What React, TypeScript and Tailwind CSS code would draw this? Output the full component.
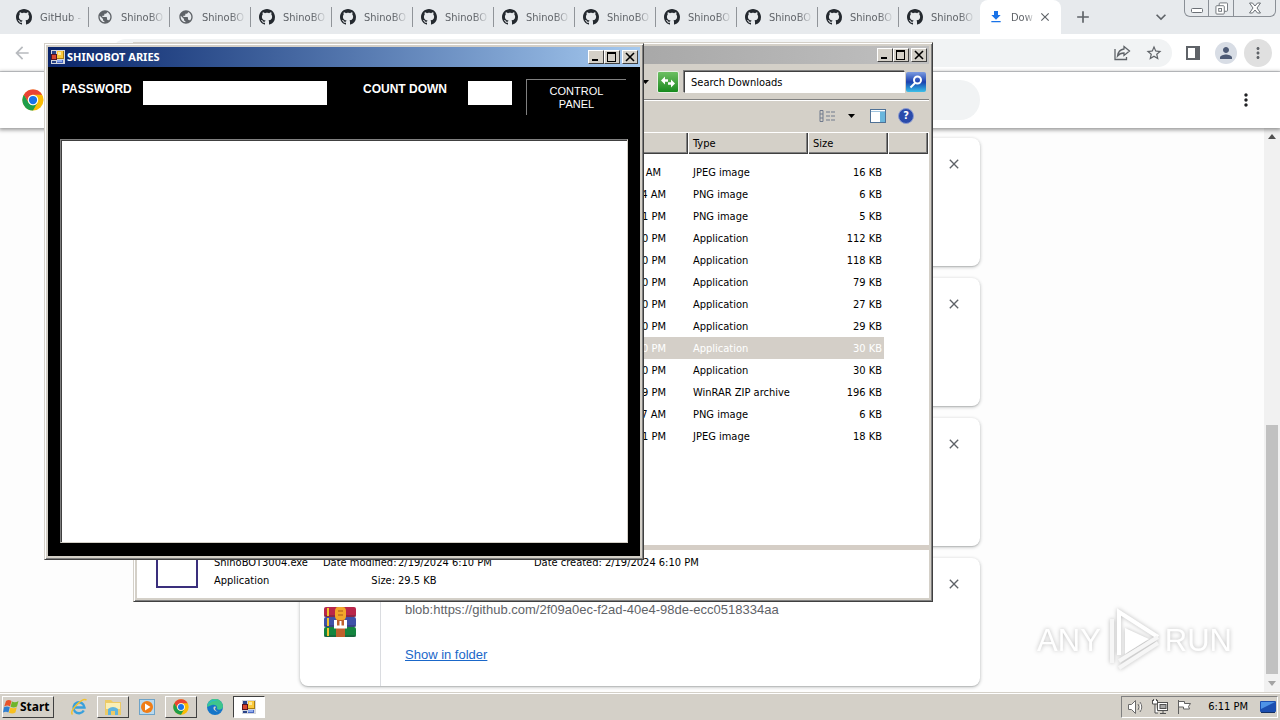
import type { ReactNode } from "react";
import { MdArrowBack, MdClose, MdDownload, MdExpandMore, MdMoreVert, MdPerson, MdPublic, MdStarBorder, MdAdd } from "react-icons/md";

const UI_FONT = "font-['DejaVu_Sans_Condensed','DejaVu_Sans',sans-serif]";
const BOLD_FONT = "font-['Noto_Sans',sans-serif]";

const tabs = [
  { title: "GitHub -", icon: "github" },
  { title: "ShinoBO", icon: "globe" },
  { title: "ShinoBO", icon: "globe" },
  { title: "ShinoBO", icon: "github" },
  { title: "ShinoBO", icon: "github" },
  { title: "ShinoBO", icon: "github" },
  { title: "ShinoBO", icon: "github" },
  { title: "ShinoBO", icon: "github" },
  { title: "ShinoBO", icon: "github" },
  { title: "ShinoBO", icon: "github" },
  { title: "ShinoBO", icon: "github" },
  { title: "ShinoBO", icon: "github" },
];

const files = [
  { time: "AM", type: "JPEG image", size: "16 KB" },
  { time: "4 AM", type: "PNG image", size: "6 KB" },
  { time: "1 PM", type: "PNG image", size: "5 KB" },
  { time: "0 PM", type: "Application", size: "112 KB" },
  { time: "0 PM", type: "Application", size: "118 KB" },
  { time: "0 PM", type: "Application", size: "79 KB" },
  { time: "0 PM", type: "Application", size: "27 KB" },
  { time: "0 PM", type: "Application", size: "29 KB" },
  { time: "0 PM", type: "Application", size: "30 KB", selected: true },
  { time: "0 PM", type: "Application", size: "30 KB" },
  { time: "9 PM", type: "WinRAR ZIP archive", size: "196 KB" },
  { time: "7 AM", type: "PNG image", size: "6 KB" },
  { time: "1 PM", type: "JPEG image", size: "18 KB" },
];

const GithubIcon = () => (
  <svg viewBox="0 0 16 16" className="w-4 h-4 shrink-0" fill="#24292f">
    <path d="M8 0C3.58 0 0 3.58 0 8c0 3.54 2.29 6.53 5.47 7.59.4.07.55-.17.55-.38 0-.19-.01-.82-.01-1.49-2.01.37-2.53-.49-2.69-.94-.09-.23-.48-.94-.82-1.13-.28-.15-.68-.52-.01-.53.63-.01 1.08.58 1.23.82.72 1.21 1.87.87 2.33.66.07-.52.28-.87.51-1.07-1.78-.2-3.64-.89-3.64-3.95 0-.87.31-1.59.82-2.15-.08-.2-.36-1.02.08-2.12 0 0 .67-.21 2.2.82.64-.18 1.32-.27 2-.27.68 0 1.36.09 2 .27 1.53-1.04 2.2-.82 2.2-.82.44 1.1.16 1.92.08 2.12.51.56.82 1.27.82 2.15 0 3.07-1.87 3.75-3.65 3.95.29.25.54.73.54 1.48 0 1.07-.01 1.93-.01 2.2 0 .21.15.46.55.38A8.013 8.013 0 0016 8c0-4.42-3.58-8-8-8z" />
  </svg>
);

const ChromeLogo = ({ className }: { className: string }) => (
  <svg viewBox="0 0 48 48" className={className}>
    <circle cx="24" cy="24" r="23" fill="#fbbc05" />
    <path d="M4 12.5A23 23 0 0 1 44 12.5H24A11.5 11.5 0 0 0 14 29.7Z" fill="#ea4335" />
    <path d="M4 12.5L14 29.7A11.5 11.5 0 0 0 34 29.7L24 47A23 23 0 0 1 4 12.5Z" fill="#1e9e4a" />
    <circle cx="24" cy="24" r="11.5" fill="#fff" />
    <circle cx="24" cy="24" r="9" fill="#1a73e8" />
  </svg>
);

// default icon of a Windows Forms application
const FormIcon = ({ className }: { className: string }) => (
  <svg viewBox="0 0 14 14" className={className} shapeRendering="crispEdges">
    <rect x="0" y="0" width="14" height="14" fill="#d4d6dc" />
    <rect x="1" y="1" width="4" height="3" fill="#2a4488" />
    <rect x="0" y="4" width="6" height="6" fill="#5a1420" />
    <rect x="1" y="5" width="4" height="4" fill="#d8482f" />
    <rect x="1" y="11" width="4" height="2" fill="#2a4488" />
    <rect x="6" y="1" width="7" height="8" fill="#a87d12" />
    <rect x="6" y="1" width="6" height="7" fill="#fbc93c" />
    <rect x="7" y="2" width="3" height="3" fill="#fdeaa0" />
    <rect x="6" y="10" width="6" height="3" fill="#4a68c0" />
    <rect x="6" y="10" width="5" height="2" fill="#8fabee" />
  </svg>
);

const ControlButton = ({ label, children }: { label: string; children: ReactNode }) => (
  <button
    type="button"
    aria-label={label}
    className="flex w-4 h-[14px] items-center justify-center bg-[#d4d0c8] border border-t-white border-l-white border-r-[#404040] border-b-[#404040]"
  >
    <svg viewBox="0 0 12 12" className="w-3 h-3" shapeRendering="crispEdges" fill="none" stroke="#000">
      {children}
    </svg>
  </button>
);

const WindowControls = () => (
  <div className="flex ml-auto">
    <ControlButton label="Minimize"><path d="M2 9h6" strokeWidth="2" /></ControlButton>
    <ControlButton label="Maximize"><path d="M1.5 2v8.5h8V2" /><path d="M1 2h9" strokeWidth="2" /></ControlButton>
    <div className="w-[2px]" />
    <ControlButton label="Close">
      <path d="M2 2l8 8M10 2l-8 8" strokeWidth="1.6" shapeRendering="auto" />
    </ControlButton>
  </div>
);

const TabStrip = () => (
  <div className="flex h-[34px] bg-[#e7eaed]">
    <div className="flex flex-1 min-w-0 pl-2">
      {tabs.map((tab, i) => (
        <button key={i} type="button" className="flex flex-1 min-w-0 items-center pl-2">
          {tab.icon === "github" ? <GithubIcon /> : <MdPublic className="w-4 h-4 shrink-0 text-[#5f6368]" />}
          <span className={`flex-1 ml-2 pt-[2px] whitespace-nowrap text-left text-[11px] text-[#5f6368] [mask-image:linear-gradient(to_right,black_65%,transparent)] ${UI_FONT}`}>
            {tab.title}
          </span>
          <span className={`w-px h-5 ml-1 ${i === tabs.length - 1 ? "" : "bg-[#909499]"}`} />
        </button>
      ))}
      <div className="flex flex-1 min-w-0 items-center pl-2 bg-white rounded-t-lg">
        <MdDownload className="w-4 h-4 shrink-0 text-[#1a73e8]" />
        <span className={`w-6 ml-[7px] pt-[2px] whitespace-nowrap text-[11px] text-[#5f6368] [mask-image:linear-gradient(to_right,black_60%,transparent)] ${UI_FONT}`}>
          Dow
        </span>
        <button type="button" aria-label="Close tab" className="ml-[3px]">
          <MdClose className="w-[14px] h-[14px] text-[#5f6368]" />
        </button>
      </div>
    </div>
    <div className="flex w-[219px] items-center pl-3 pr-1">
      <button type="button" aria-label="New tab"><MdAdd className="w-5 h-5 text-[#5f6368]" /></button>
      <button type="button" aria-label="Search tabs" className="ml-auto mr-[13px]">
        <MdExpandMore className="w-5 h-5 text-[#5f6368]" />
      </button>
      <div className="flex h-[17px] self-start rounded-b-md border border-t-0 border-[#8a8f96] text-[#5f6368]">
        <button type="button" aria-label="Minimize" className="flex w-6 items-center justify-center border-r border-[#8a8f96]">
          <svg viewBox="0 0 12 12" className="w-3 h-3" fill="#fff" stroke="#6b7076"><rect x="0.5" y="6.5" width="11" height="4" rx="1" /></svg>
        </button>
        <button type="button" aria-label="Restore" className="flex w-[25px] items-center justify-center border-r border-[#8a8f96]">
          <svg viewBox="0 0 14 14" className="w-[13px] h-[13px]" fill="#fff" stroke="#6b7076"><rect x="4.5" y="1" width="9" height="9" rx="1" /><rect x="1" y="4" width="9" height="9" rx="1" /><rect x="4" y="7" width="3" height="3" /></svg>
        </button>
        <button type="button" aria-label="Close" className="flex w-[41px] items-center justify-center">
          <svg viewBox="0 0 12 12" className="w-3 h-3" fill="#fff" stroke="#6b7076"><path d="M0.5 1h3L6 4l2.500-3h3L8 6l3.500 5h-3L6 8l-2.500 3h-3L4 6z" /></svg>
        </button>
      </div>
    </div>
  </div>
);

const BrowserToolbar = () => (
  <div className="flex h-[38px] items-center bg-white border-b border-[#d5d7da] pl-3 pr-2 text-[#5f6368]">
    <button type="button" aria-label="Back"><MdArrowBack className="w-5 h-5 text-[#b8bbbf]" /></button>
    <div className="flex flex-1 h-7 ml-20 items-center justify-end gap-[14px] rounded-full bg-[#f1f3f4] pr-[9px]">
      <button type="button" aria-label="Share">
        <svg viewBox="0 0 18 18" className="w-[18px] h-[18px]" fill="none" stroke="#5f6368" strokeWidth="1.300">
          <path d="M2 5v10.500h11.500V13" />
          <path d="M11 2.500L16.500 7 11 11.500V9C8 9 6 10 4.500 12 5 8 7.500 5.500 11 5z" />
        </svg>
      </button>
      <button type="button" aria-label="Bookmark"><MdStarBorder className="w-[18px] h-[18px]" /></button>
    </div>
    <button type="button" aria-label="Side panel" className="ml-[14px]">
      <svg viewBox="0 0 14 14" className="w-[14px] h-[14px]"><path d="M1 1h12v12H1z" fill="#fff" stroke="#5f6368" strokeWidth="2" /><path d="M9 0h5v14H9z" fill="#5f6368" /></svg>
    </button>
    <button type="button" aria-label="Profile" className="flex w-[22px] h-[22px] ml-[15px] items-center justify-center rounded-full bg-[#d8dde5]">
      <MdPerson className="w-[18px] h-[18px] text-[#4d5a75]" />
    </button>
    <button type="button" aria-label="Menu" className="flex w-7 h-7 ml-[7px] items-center justify-center rounded-full bg-[#e0e0e0]">
      <MdMoreVert className="w-[18px] h-[18px]" />
    </button>
  </div>
);

const WinrarIcon = () => (
  <svg viewBox="0 0 32 32" className="w-8 h-8">
    <rect x="0" y="1" width="32" height="10" rx="2" fill="#b9264a" />
    <rect x="0" y="11" width="32" height="10" rx="2" fill="#3f51a8" />
    <rect x="0" y="21" width="32" height="10" rx="2" fill="#14853f" />
    <path d="M0 10h32M0 20h32M0 30h32" stroke="#262a3b" strokeOpacity="0.6" />
    <path d="M4 2v8M4 12v8M4 22v8" stroke="#f3c12f" strokeWidth="2" />
    <rect x="12" y="1" width="9" height="30" fill="#c0602c" />
    <rect x="11" y="1" width="11" height="13" rx="4" fill="#f2a72a" />
    <path d="M14 5h5M14 9h5" stroke="#a9561c" />
    <path d="M11.500 14v7h10v-7" fill="none" stroke="#fff" strokeWidth="3" />
    <path d="M16.500 15v5" stroke="#fff" strokeWidth="2" />
  </svg>
);

const DownloadCard = ({ children }: { children?: ReactNode }) => (
  <li className="flex h-32 rounded-lg bg-white shadow-[0_1px_3px_1px_rgba(60,64,67,0.2),0_1px_1px_rgba(60,64,67,0.2)]">
    <div className="flex w-[81px] shrink-0 items-center justify-center border-r border-[#dadce0]">
      {children && <WinrarIcon />}
    </div>
    <div className="flex-1 pl-6 pt-11">{children}</div>
    <button type="button" aria-label="Remove from list" className="self-start mt-[18px] mr-[18px]">
      <MdClose className="w-4 h-4 text-[#5f6368]" />
    </button>
  </li>
);

const DownloadsPage = () => (
  <>
    <header className="relative flex h-14 shrink-0 items-center bg-white pl-[22px] pr-6 shadow-[0_1px_4px_1px_rgba(0,0,0,0.4)]">
      <ChromeLogo className="w-[22px] h-[22px]" />
      <input type="search" aria-label="Search downloads" className="w-[680px] h-10 mx-auto rounded-full bg-[#f1f3f4] px-4 outline-none" />
      <button type="button" aria-label="More actions"><MdMoreVert className="w-5 h-5 text-[#202124]" /></button>
    </header>
    <div className="flex flex-1 min-h-0 bg-[#fdfdfd]">
      <ul className="flex flex-1 flex-col items-stretch gap-3 overflow-hidden pt-[10px] pl-4 [&>li]:w-[680px] [&>li]:shrink-0 [&>li]:mx-auto">
        <DownloadCard />
        <DownloadCard />
        <DownloadCard />
        <DownloadCard>
          <p className="font-['Liberation_Sans',sans-serif] text-[13px] leading-4 text-[#5f6368]">blob:https://github.com/2f09a0ec-f2ad-40e4-98de-ecc0518334aa</p>
          <a href="#folder" className="inline-block mt-[29px] font-['Liberation_Sans',sans-serif] text-[13px] leading-4 text-[#1a67c9] underline">Show in folder</a>
        </DownloadCard>
      </ul>
      <div className="flex w-4 flex-col items-center bg-[#f1f1f1] py-[6px]">
        <svg viewBox="0 0 8 5" className="w-2 h-[5px]"><path d="M0 5l4-5 4 5z" fill="#505050" /></svg>
        <div className="flex-1" />
        <div className="w-3 h-[249px] mb-[7px] bg-[#c1c1c1]" />
        <svg viewBox="0 0 8 5" className="w-2 h-[5px]"><path d="M0 0l4 5 4-5z" fill="#a3a3a3" /></svg>
      </div>
    </div>
  </>
);

const frame = "border border-t-[#d4d0c8] border-l-[#d4d0c8] border-r-[#404040] border-b-[#404040] shadow-[inset_1px_1px_#fff,inset_-1px_-1px_#808080] bg-[#d4d0c8] p-[3px]";

const ExplorerWindow = () => (
  <section className={`absolute left-[133px] top-[42px] flex w-[800px] h-[560px] flex-col text-[11px] text-black ${UI_FONT} ${frame}`}>
    <div className="flex h-[18px] shrink-0 items-center bg-linear-to-r from-[#808080] to-[#c0c0c0] pr-[2px]">
      <WindowControls />
    </div>
    <div className="flex h-9 shrink-0 items-center justify-end border-b border-[#808080] pr-[3px]">
      <svg viewBox="0 0 7 4" className="w-[7px] h-1 mr-2"><path d="M0 0h7L3.500 4z" /></svg>
      <button type="button" aria-label="Refresh" className="flex w-[22px] h-[22px] items-center justify-center rounded-xs border border-[#e8efe4] bg-linear-to-b from-[#6cbf62] to-[#128a1c]">
        <svg viewBox="0 0 16 16" className="w-4 h-4" fill="#fff">
          <path d="M5 2.500v2.800h3v2.400H5v2.800L1 6.500zM11 5.500v2.800H8v2.400h3v2.800l4-4z" />
        </svg>
      </button>
      <input
        type="text"
        aria-label="Search"
        defaultValue="Search Downloads"
        className="w-[221px] h-[22px] ml-[5px] mr-px pt-[2px] border border-t-[#404040] border-l-[#404040] border-white bg-white px-[6px] shadow-[-1px_-1px_#808080] outline-none"
      />
      <button type="button" aria-label="Start search" className="flex w-5 h-5 items-center justify-center rounded-xs bg-linear-to-b from-[#7d9be0] via-[#1d3fae] to-[#3fc0e8]">
        <svg viewBox="0 0 16 16" className="w-4 h-4" fill="none" stroke="#fff" strokeWidth="2">
          <circle cx="9.500" cy="6" r="3.500" />
          <path d="M7 9l-4.500 4.500" />
        </svg>
      </button>
    </div>
    <div className="flex h-8 shrink-0 items-center justify-end border-t border-white pr-[15px] pb-px">
      <button type="button" aria-label="Change view" className="flex items-center">
        <svg viewBox="0 0 16 12" className="w-4 h-3" fill="none" stroke="#707a8c">
          <path d="M1 .5h3v11H1zM1 4h3M1 8h3M7 2h4M12 2h4M7 6h4M12 6h4M7 10h4M12 10h4" />
        </svg>
        <svg viewBox="0 0 7 4" className="w-[7px] h-1 ml-[13px]"><path d="M0 0h7L3.500 4z" /></svg>
      </button>
      <button type="button" aria-label="Preview pane" className="ml-[15px]">
        <svg viewBox="0 0 16 14" className="w-4 h-[14px]">
          <rect x=".5" y=".5" width="15" height="13" fill="#fff" stroke="#4f7196" />
          <rect x="10" y="2" width="5" height="11" fill="#69b6dc" />
          <path d="M1 2.500h14" stroke="#9fc3dd" />
        </svg>
      </button>
      <button type="button" aria-label="Help" className="flex w-4 h-4 ml-3 items-center justify-center rounded-full border border-[#8b9bd0] bg-[#2a4bab] text-[11px] font-bold text-white">?</button>
    </div>
    <div className="flex-1 bg-white pr-px">
      <table className="w-full table-fixed border-separate border-spacing-0">
        <colgroup>
          <col />
          <col className="w-[120px]" />
          <col className="w-[120px]" />
          <col className="w-20" />
          <col className="w-10" />
        </colgroup>
        <thead>
          <tr className="h-[22px] bg-[#d4d0c8] text-left [&>th]:font-normal [&>th]:pl-[5px] [&>th]:pt-[3px] [&>th]:shadow-[inset_1px_1px_#fff,inset_-1px_-1px_#404040,inset_-2px_-2px_#808080]">
            <th /><th /><th>Type</th><th>Size</th><th />
          </tr>
        </thead>
        <tbody>
          <tr className="h-[7px]"><td colSpan={5} /></tr>
          {files.map((file, i) => (
            <tr key={i} className={`h-[22px] [&>td]:pt-[2px] ${file.selected ? "text-white [&>td:not(:last-child)]:bg-[#d4cfc8]" : ""}`}>
              <td />
              <td className={`text-right ${i === 0 ? "pr-[27px]" : "pr-[22px]"}`}>{file.time}</td>
              <td className="pl-[5px]">{file.type}</td>
              <td className="border-r-4 border-white pr-[2px] text-right">{file.size}</td>
              <td />
            </tr>
          ))}
        </tbody>
      </table>
    </div>
    <div className="h-[5px] shrink-0 bg-[#d5cec6]" />
    <div className="flex h-12 shrink-0 bg-white pl-[19px]">
      <div className="w-[42px] h-[38px] border-2 border-t-0 border-[#3a2f7c]" />
      <dl className="grid flex-1 grid-cols-[109px_72px_139px_1fr] content-start ml-4 pt-1 leading-[18px] whitespace-nowrap">
        <dd>ShinoBOT3004.exe</dd>
        <dt className="text-right">Date modified:</dt>
        <dd className="pl-[3px]">2/19/2024 6:10 PM</dd>
        <dd>Date created: 2/19/2024 6:10 PM</dd>
        <dd>Application</dd>
        <dt className="text-right">Size:</dt>
        <dd className="pl-[3px]">29.5 KB</dd>
      </dl>
    </div>
  </section>
);

const ShinobotWindow = () => (
  <section className={`absolute left-11 top-[43px] flex w-[600px] h-[517px] flex-col ${frame}`}>
    <div className="flex h-5 shrink-0 items-center bg-linear-to-r from-[#0a246a] to-[#a6caf0] pl-[3px] pr-[2px]">
      <FormIcon className="w-[14px] h-[14px]" />
      <h1 className={`ml-[2px] text-[11px] font-bold text-white ${BOLD_FONT}`}>SHINOBOT ARIES</h1>
      <WindowControls />
    </div>
    <form className="flex flex-1 flex-col bg-black px-3 pt-3 pb-[13px] font-['Liberation_Sans',sans-serif] text-white">
      <div className="flex h-[60px] items-start pl-[2px] pr-[2px] text-[12px] font-bold">
        <label htmlFor="password" className="w-[81px] mt-[2px] leading-4">PASSWORD</label>
        <input id="password" type="password" className="w-[184px] h-6 mt-[2px] bg-white text-black outline-none" />
        <label htmlFor="countdown" className="w-[105px] mt-[2px] ml-auto leading-4">COUNT DOWN</label>
        <input id="countdown" type="text" className="w-11 h-6 mt-[2px] bg-white text-black outline-none" />
        <button type="button" className="w-[100px] h-9 ml-[14px] border-t border-l border-[#808080] bg-black text-[11px] leading-[13px] font-normal">
          CONTROL<br />PANEL
        </button>
      </div>
      <textarea aria-label="Output" className="w-full flex-1 resize-none border border-t-[#808080] border-l-[#808080] border-r-[#d4d0c8] border-b-[#d4d0c8] bg-white text-black shadow-[inset_1px_1px_#404040] outline-none" />
    </form>
  </section>
);

const Watermark = () => (
  <div className="absolute right-12 bottom-12 flex items-center gap-1 font-['Liberation_Sans',sans-serif] text-[31px] leading-none text-white [filter:drop-shadow(0_0_2px_#bcbcbc)]">
    <span>ANY</span>
    <svg viewBox="0 0 56 64" className="w-14 h-16" fill="none" stroke="#fff" strokeWidth="4">
      <path d="M14 47V4l39 25" />
      <path d="M7 11v44M14 53l39-24M14 60l39-25" stroke="#f6f6f6" />
      <path d="M20 20v26l24-15z" fill="#fff" stroke="none" />
    </svg>
    <span>RUN</span>
  </div>
);

const raised = "border border-t-white border-l-white border-r-[#404040] border-b-[#404040]";

const Taskbar = () => (
  <footer className={`relative flex h-7 shrink-0 items-center border-t border-[#d4d0c8] bg-[#d4d0c8] pl-[2px] pr-[2px] text-[11px] text-black shadow-[inset_0_1px_#fff] ${UI_FONT}`}>
    <button type="button" className={`flex w-[52px] h-[22px] items-center gap-px text-[12px] font-bold ${BOLD_FONT} ${raised}`}>
      <svg viewBox="0 0 16 16" className="w-4 h-4 shrink-0">
        <path d="M3 2c2-1.500 4-1 5.500 0L7 7.500C5.500 6.200 3.500 6.200 1.200 7.500z" fill="#e8542a" />
        <path d="M9 2.500c2 1 4 1 6.500-.5L14 7.500c-2 1.200-4.500 1.200-6.500.3z" fill="#6fb52c" />
        <path d="M1 8.200c2-1 4-1 5.800 0L5.400 13.500c-1.500-1-3.500-1-5.400 0z" fill="#2f7fd0" />
        <path d="M7.300 8.500c2 1 4.500.8 6.500-.3l-1.400 5.300c-2 1.300-4.500 1-6.500.2z" fill="#f8c020" />
      </svg>
      Start
    </button>
    <nav className="flex items-center ml-[9px]">
      <button type="button" aria-label="Internet Explorer" className="flex w-8 h-[22px] items-center justify-center">
        <svg viewBox="0 0 18 18" className="w-[18px] h-[18px]" fill="none">
          <path d="M13.800 12.500A5.500 5.500 0 1 1 14.500 9.500H5" stroke="#38a0dc" strokeWidth="2.400" />
          <path d="M2.500 16.500C-1 13 12-.5 16.500 2" stroke="#f2c12e" strokeWidth="1.500" />
        </svg>
      </button>
      <button type="button" aria-label="Windows Explorer" className={`flex w-8 h-[22px] ml-[2px] items-center justify-center ${raised}`}>
        <svg viewBox="0 0 18 18" className="w-[18px] h-[18px] shrink-0">
          <path d="M1 2h6l2 2h8v13H1z" fill="#ecca66" />
          <path d="M2 5h14v6H2z" fill="#f9eeb5" />
          <path d="M4 17V11q5-4 10 0v6h-3v-4H7v4z" fill="#5fb4de" />
        </svg>
      </button>
      <button type="button" aria-label="Media Player" className="flex w-9 h-[22px] items-center justify-center">
        <svg viewBox="0 0 16 16" className="w-4 h-4">
          <rect x=".5" y=".5" width="15" height="15" fill="#b9d9ee" stroke="#6da3c8" />
          <circle cx="8" cy="8" r="6" fill="#f07d16" />
          <path d="M6 4.500L11.500 8 6 11.500z" fill="#fff" />
        </svg>
      </button>
      <button type="button" aria-label="Chrome" className={`flex w-8 h-[22px] items-center justify-center ${raised}`}>
        <ChromeLogo className="w-4 h-4" />
      </button>
      <button type="button" aria-label="Edge" className="flex w-9 h-[22px] items-center justify-center">
        <svg viewBox="0 0 16 16" className="w-4 h-4">
          <circle cx="8" cy="8" r="8" fill="#1575c8" />
          <path d="M0 8a8 8 0 0 1 16-.5c0 3-4 4-6 2.500 1-3-2-5-5-4S0 8 0 8z" fill="#3ec58c" />
          <path d="M0 8a8 8 0 0 1 11-6.500C5 1 1 4 0 8z" fill="#27b4d8" />
          <path d="M6.500 8.500c-.5 3 3 5 7.500 3.500-2 1-4.500.5-5.500-1s0-2 .5-3c-1-.8-2.300-.5-2.500.5z" fill="#d4d0c8" />
        </svg>
      </button>
      <button type="button" aria-label="SHINOBOT ARIES" className="flex w-8 h-[22px] items-center justify-center border border-t-[#404040] border-l-[#404040] border-r-white border-b-white bg-white">
        <FormIcon className="w-[14px] h-[14px]" />
      </button>
    </nav>
    <div className="flex h-[22px] ml-auto items-center border border-t-[#808080] border-l-[#808080] border-r-white border-b-white pl-[6px] pr-px">
      <svg viewBox="0 0 16 16" className="w-4 h-4" fill="#fff" stroke="#6a6a6a">
        <path d="M.5 5.500h3l4-4v13l-4-4h-3zM10 5q2 3 0 6M12 3q3.500 5 0 10" />
      </svg>
      <svg viewBox="0 0 16 16" className="w-4 h-4 ml-2" fill="#fff" stroke="#505050">
        <rect x="5.500" y="3.500" width="10" height="8" />
        <rect x="8" y="5.500" width="6" height="4" fill="#a8a8a8" />
        <path d="M8 14.500h6M11 12v2M.5 1v4h5V1M3 5v9h3M1.500 0v2M4.500 0v2" />
      </svg>
      <svg viewBox="0 0 16 16" className="w-4 h-4 ml-2" fill="#fff" stroke="#606060">
        <path d="M2.500 1v14M2.500 2.500h6v2h6l-2 3 1 2.500h-6v-2h-5" />
      </svg>
      <time className="ml-4 pt-[2px]">6:11 PM</time>
      <svg viewBox="0 0 16 14" className="w-4 h-[14px] ml-3">
        <rect x="0" y="1" width="16" height="11" rx="1" fill="#1d4fb0" />
        <path d="M1 2h14L1 9z" fill="#4f93e6" />
        <path d="M1 12.500h14" stroke="#143064" />
      </svg>
    </div>
  </footer>
);

const App = () => (
  <div className="relative flex h-screen flex-col overflow-hidden bg-white font-['Roboto',sans-serif]">
    <main className="flex flex-1 min-h-0 flex-col">
      <TabStrip />
      <BrowserToolbar />
      <DownloadsPage />
    </main>
    <ExplorerWindow />
    <ShinobotWindow />
    <Watermark />
    <Taskbar />
  </div>
);

export default App;
